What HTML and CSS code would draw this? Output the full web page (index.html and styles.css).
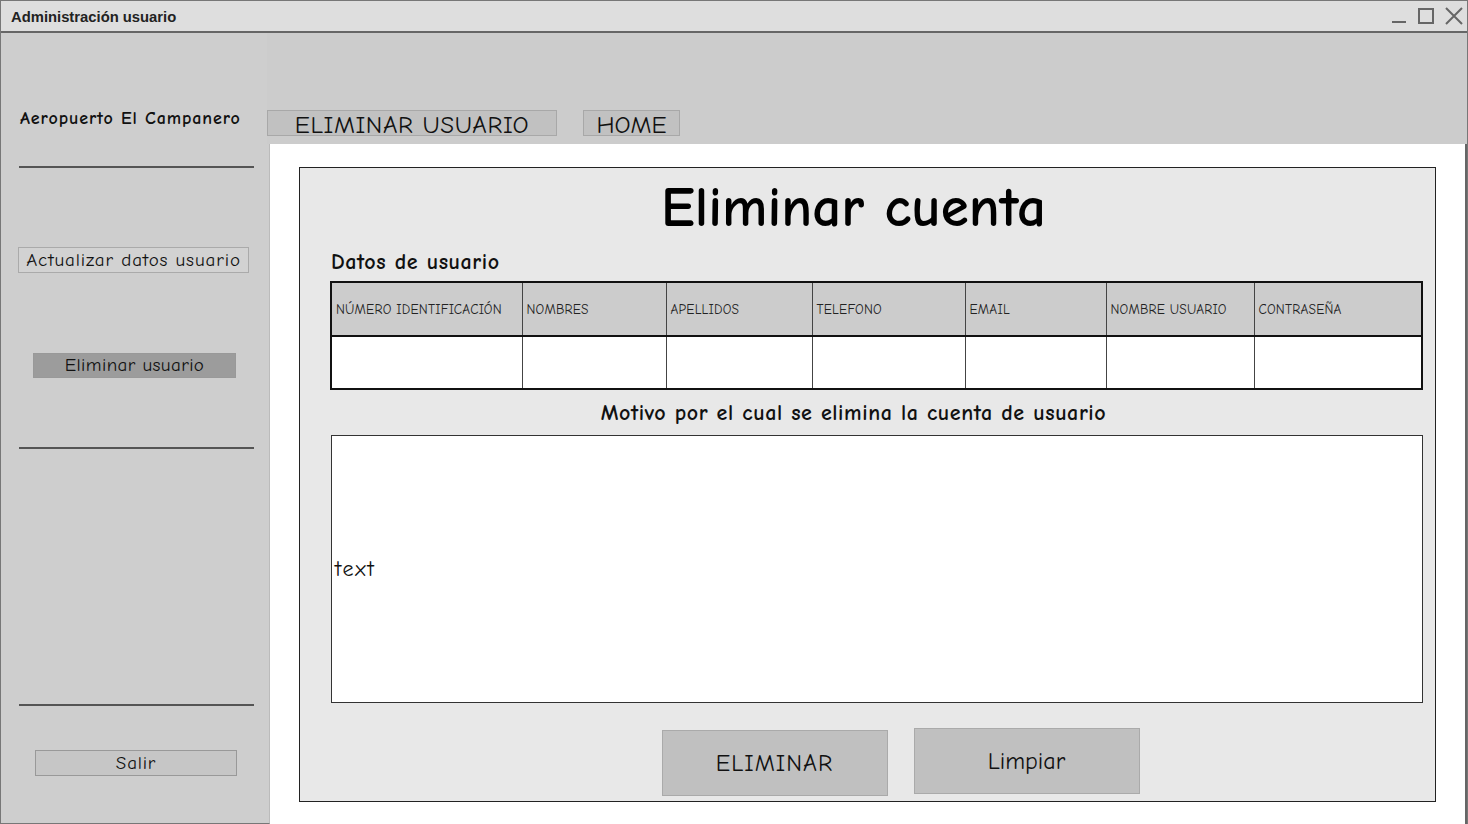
FILE: index.html
```html
<!DOCTYPE html>
<html lang="es">
<head>
<meta charset="utf-8">
<title>Administración usuario</title>
<link rel="stylesheet" href="styles.css">
</head>
<body>
<div class="window">
  <div class="titlebar">
    <span class="title">Administración usuario</span>
    <div class="controls">
      <svg width="16" height="18" viewBox="0 0 16 18"><line x1="1" y1="15" x2="15" y2="15" stroke="#666" stroke-width="2"/></svg>
      <svg width="18" height="18" viewBox="0 0 18 18"><rect x="2" y="2" width="14" height="14" fill="none" stroke="#666" stroke-width="2"/></svg>
      <svg width="18" height="18" viewBox="0 0 18 18"><path d="M1 1 L17 17 M17 1 L1 17" stroke="#666" stroke-width="2" fill="none"/></svg>
    </div>
  </div>
  <div class="body">
    <aside class="sidebar">
      <div class="brand">Aeropuerto El Campanero</div>
      <div class="rule rule-1"></div>
      <div class="side-btn btn-update">Actualizar datos usuario</div>
      <div class="side-btn btn-delete">Eliminar usuario</div>
      <div class="rule rule-2"></div>
      <div class="rule rule-3"></div>
      <div class="side-btn btn-exit">Salir</div>
    </aside>
    <div class="content">
      <nav class="topnav">
        <div class="nav-btn nav-delete">ELIMINAR USUARIO</div>
        <div class="nav-btn nav-home">HOME</div>
      </nav>
      <main class="main">
        <section class="panel">
          <h1 class="panel-title">Eliminar cuenta</h1>
          <h2 class="section-label">Datos de usuario</h2>
          <table class="users">
            <colgroup>
              <col class="c1"><col class="c2"><col class="c3"><col class="c4"><col class="c5"><col class="c6"><col class="c7">
            </colgroup>
            <thead>
              <tr>
                <th>NÚMERO IDENTIFICACIÓN</th>
                <th>NOMBRES</th>
                <th>APELLIDOS</th>
                <th>TELEFONO</th>
                <th>EMAIL</th>
                <th>NOMBRE USUARIO</th>
                <th>CONTRASEÑA</th>
              </tr>
            </thead>
            <tbody>
              <tr><td></td><td></td><td></td><td></td><td></td><td></td><td></td></tr>
            </tbody>
          </table>
          <h2 class="reason-label">Motivo por el cual se elimina la cuenta de usuario</h2>
          <div class="reason-box">text</div>
          <div class="actions">
            <div class="action-btn btn-eliminar">ELIMINAR</div>
            <div class="action-btn btn-limpiar">Limpiar</div>
          </div>
        </section>
      </main>
    </div>
  </div>
</div>
</body>
</html>
```
FILE: styles.css
```css
* { box-sizing: border-box; }
html, body { margin: 0; padding: 0; }
body {
  width: 1468px;
  height: 824px;
  overflow: hidden;
  background: #ffffff;
  font-family: "Comic Sans MS", "Comic Neue", "Open Sans", sans-serif;
  color: #111;
}
.window {
  width: 1468px;
  height: 824px;
  border: 1px solid #777;
  border-bottom: none;
  display: flex;
  flex-direction: column;
}
.titlebar {
  height: 32px;
  flex: none;
  background: #dedede;
  border-bottom: 2px solid #666;
  display: flex;
  align-items: center;
  justify-content: space-between;
  padding: 0 4px 0 10px;
}
.title {
  font-family: "Liberation Sans", Arial, sans-serif;
  font-size: 14.8px;
  font-weight: bold;
  color: #222;
  margin-top: 1px;
}
.controls {
  display: flex;
  gap: 10px;
  align-items: center;
}
.controls svg { display: block; }
.body {
  flex: 1;
  display: flex;
  min-height: 0;
}
.sidebar {
  width: 269px;
  flex: none;
  background: #cecece;
  border-right: 1px solid #bbb;
  border-bottom: 1px solid #777;
  display: flex;
  flex-direction: column;
  padding: 0 0 0 18px;
}
.brand {
  margin-top: 75px;
  padding-left: 1px;
  font-size: 18px;
  letter-spacing: 0.9px;
  font-weight: bold;
  line-height: 22px;
  height: 22px;
  white-space: nowrap;
}
.rule {
  width: 235px;
  height: 2px;
  background: #555;
}
.rule-1 { margin-top: 36px; }
.rule-2 { margin-top: 69px; }
.rule-3 { margin-top: 255px; }
.side-btn {
  font-size: 19px;
  line-height: 24px;
  text-align: center;
  white-space: nowrap;
  border: 1px solid #aaa;
}
.btn-update {
  margin-top: 79px;
  margin-left: -1px;
  width: 231px;
  height: 26px;
  background: #d2d2d2;
  letter-spacing: 0.9px;
}
.btn-delete {
  margin-top: 80px;
  margin-left: 14px;
  width: 203px;
  height: 25px;
  background: #9c9c9c;
  border-color: #999;
  line-height: 23px;
  letter-spacing: 0.4px;
}
.btn-exit {
  margin-top: 44px;
  margin-left: 16px;
  width: 202px;
  height: 26px;
  background: #c6c6c6;
  border-color: #999;
  letter-spacing: 0.8px;
}
.content {
  flex: 1;
  display: flex;
  flex-direction: column;
  min-width: 0;
}
.topnav {
  height: 111px;
  flex: none;
  background: #cccccc;
  display: flex;
  align-items: flex-end;
  gap: 26px;
  padding-bottom: 8px;
  margin-left: -3px;
}
.nav-btn {
  height: 26px;
  background: #c1c1c1;
  border: 1px solid #a8a8a8;
  font-size: 25px;
  line-height: 24px;
  display: flex;
  align-items: center;
  justify-content: center;
  white-space: nowrap;
  padding-top: 4px;
}
.nav-delete { width: 290px; letter-spacing: 0.6px; }
.nav-home { width: 97px; }
.main {
  flex: 1;
  background: #ffffff;
  border-right: 2px solid #666;
  padding: 23px 29px 22px 29px;
  display: flex;
  min-height: 0;
  min-width: 0;
}
.panel {
  flex: 1;
  min-width: 0;
  background: #e8e8e8;
  border: 1px solid #222;
  padding: 0 12px 0 30px;
  display: flex;
  flex-direction: column;
}
.panel-title {
  margin: 9px 0 0;
  font-size: 57px;
  line-height: 62px;
  height: 62px;
  font-weight: bold;
  text-align: center;
  color: #000;
  padding-right: 46px;
  white-space: nowrap;
}
.section-label {
  margin: 11px 0 0 1px;
  font-size: 22px;
  letter-spacing: 0.6px;
  line-height: 24px;
  font-weight: bold;
}
.users {
  margin-top: 7px;
  width: 100%;
  border-collapse: collapse;
  border: 2px solid #111;
  table-layout: fixed;
}
.users col.c1 { width: 191px; }
.users col.c2 { width: 144px; }
.users col.c3 { width: 146px; }
.users col.c4 { width: 153px; }
.users col.c5 { width: 141px; }
.users col.c6 { width: 148px; }
.users col.c7 { width: auto; }
.users th {
  height: 54px;
  background: #cccccc;
  border: 1px solid #444;
  border-bottom: 2px solid #111;
  font-size: 13.5px;
  letter-spacing: 0.2px;
  font-weight: normal;
  text-align: left;
  padding: 0 0 0 4px;
  white-space: nowrap;
  overflow: hidden;
  color: #222;
}
.users td {
  height: 53px;
  background: #ffffff;
  border: 1px solid #444;
}
.reason-label {
  margin: 10px 0 0;
  font-size: 22px;
  letter-spacing: 0.6px;
  line-height: 26px;
  font-weight: bold;
  text-align: center;
  padding-right: 46px;
  white-space: nowrap;
}
.reason-box {
  margin-top: 9px;
  margin-left: 1px;
  height: 268px;
  background: #ffffff;
  border: 1px solid #333;
  display: flex;
  align-items: center;
  padding: 0 0 0 3px;
  font-size: 22px;
  letter-spacing: 1.8px;
}
.actions {
  display: flex;
  justify-content: center;
  align-items: flex-start;
  gap: 26px;
  margin-top: 25px;
  padding-left: 48px;
}
.action-btn {
  width: 226px;
  height: 66px;
  background: #c0c0c0;
  border: 1px solid #aaa;
  font-size: 24px;
  display: flex;
  align-items: center;
  justify-content: center;
}
.btn-eliminar { margin-top: 2px; letter-spacing: 1px; }
```
